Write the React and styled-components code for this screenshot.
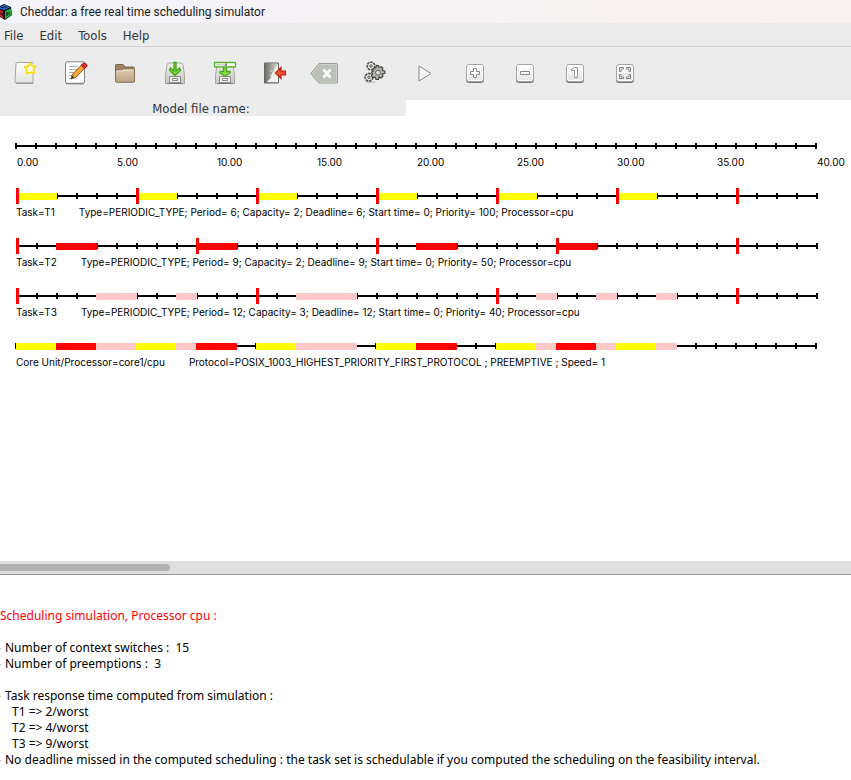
import React from "react";
import styled, { createGlobalStyle } from "styled-components";

const GlobalStyle = createGlobalStyle`
  *, *::before, *::after { box-sizing: border-box; }
  body { margin: 0; background: #fff; overflow: hidden; }
`;

const uiFont = `"DejaVu Sans Condensed", "DejaVu Sans", sans-serif`;

const Window = styled.div`
  display: flex;
  flex-direction: column;
  min-height: 100vh;
  font-family: ${uiFont};
  font-stretch: condensed;
  font-size: 12px;
  line-height: 16px;
  color: #000;
`;

const TitleBar = styled.header`
  display: flex;
  align-items: center;
  gap: 7px;
  height: 23px;
  background: linear-gradient(90deg, #f3f3f9, #f9f1ee);
  svg { flex: none; }
`;

const Title = styled.h1`
  margin: 0;
  font: 400 12px/16px Roboto, sans-serif;
  color: #1a1a1a;
`;

const MenuBar = styled.nav`
  display: flex;
  gap: 16px;
  height: 24px;
  padding: 2px 4px 0;
  background: #ececec;
  border-bottom: 1px solid #d2d2d2;
`;

const MenuButton = styled.button`
  padding: 0;
  border: 0;
  background: none;
  font: inherit;
  font-size: 13px;
  color: #303542;
`;

const Toolbar = styled.div`
  display: flex;
  height: 53px;
  background: #ececec;
`;

const ToolButton = styled.button`
  display: grid;
  place-items: center;
  flex: none;
  width: 50px;
  padding: 0 0 1px;
  border: 0;
  background: none;
`;

const FileRow = styled.div`
  width: 406px;
  max-width: 100%;
  height: 16px;
  background: #ececec;
  text-align: center;
  font-size: 13px;
  line-height: 18px;
  color: #303542;
  padding-right: 4px;
`;

const ChartPane = styled.main`
  height: 445px;
  padding-top: 22px;
  overflow: hidden;
  font-family: Inter, Arial, sans-serif;
  font-size: 10px;
  line-height: 12px;
`;

const TrackRow = styled.section`
  display: flex;
  flex-direction: column;
  gap: 2px;
  height: 50px;
`;

const TrackSvg = styled.svg`
  display: block;
  flex: none;
`;

const AxisLabels = styled.div`
  display: grid;
  grid-template-columns: repeat(9, 100px);
  padding-left: 17px;
`;

const TrackText = styled.div`
  display: flex;
  gap: 24px;
  padding-left: 16px;
  white-space: nowrap;
`;

const ScrollTrack = styled.div`
  height: 14px;
  padding-top: 3px;
  background: #dfdfdf;
  border-bottom: 1px solid #979797;
`;

const ScrollThumb = styled.div`
  width: 20%;
  height: 7px;
  border-radius: 0 4px 4px 0;
  background: #b1b3b5;
`;

const Log = styled.section`
  flex: 1;
  padding-top: 33px;
  font-family: "Noto Sans", "Open Sans", sans-serif;
  font-stretch: normal;
  font-size: 12px;
  white-space: pre;
`;

const LogHeading = styled.h2`
  margin: 0 0 16px;
  font: inherit;
  color: #f00;
`;

const LogGroup = styled.div`
  margin-bottom: ${(p) => (p.$last ? "0" : "16px")};
`;

const LogLine = styled.div`
  display: flex;
  align-items: center;
  padding-left: ${(p) => (p.$nested ? "7px" : "0")};

  &::before {
    content: "";
    width: 1px;
    height: 1px;
    margin-right: 4px;
    background: ${(p) => (p.$nested ? "transparent" : "#a9bfd0")};
  }
`;

function Cube() {
  return (
    <svg width="13" height="18" viewBox="0 0 13 18" aria-hidden="true">
      <path d="M0 3 4 1 11 4 12 12 5 17 0 14Z" fill="#111" />
      <path d="M0 4 5 1.500 10 4.500 4 7 0 6Z" fill="#2761c8" />
      <path d="M0 7 3 8.500 3.500 15.500 0 13Z" fill="#df282b" />
      <path d="M5 8 11 5.500 11.500 12 5 16Z" fill="#26a742" />
      <path d="M1 4.500h3M4 3.500l3 1M1 9v3M2 10l1 3M7 9v4M7 11l3-2M9 11l1 1" stroke="#14172b" fill="none" />
    </svg>
  );
}

const drive = (
  <>
    <path d="M2.500 22.500v-8L4 4q.3-2 2-2h12q1.700 0 2 2l1.500 10.500v8Z" fill="url(#metal)" stroke="#a5a6a1" />
    <path d="M4 22.500h16" stroke="#777873" />
    <path d="M6.500 21.500v-6h11v6Z" fill="#e8e8e5" stroke="#8e8f8a" />
    <path d="M9.500 17.500h5v2h-5Z" fill="#fff" stroke="#888984" />
  </>
);

const page = "M3 2.500q0-1 1-1h15q1 0 1 1v19q0 .5-1 .5H3q-1 0-1-1Z";
const pad = (
  <>
    <rect x="3" y="4" width="18" height="18" rx="3" fill="#777975" />
    <rect x="3.500" y="3.500" width="17" height="17" rx="2.500" fill="url(#paper)" stroke="#a3a4a0" />
    <rect x="4.500" y="4.500" width="15" height="15" rx="1.500" fill="none" stroke="#fff" />
  </>
);

const icons = {
  New: (
    <>
      <path d={page} fill="url(#paper)" stroke="#a6a6a6" />
      <path d="M3 22.300h17" stroke="#868686" />
      <circle cx="17.300" cy="7.500" r="5.500" fill="#fff28a" opacity=".8" />
      <path d="m17.300 2.300 1.700 2.700 3.600.5-2.200 2.900.9 3.500-4-.6-3.600 1.400-.1-3.900-1.900-2.900 3.600-.5Z" fill="#fffde6" stroke="#f2dc16" strokeWidth="1.700" strokeLinejoin="round" />
    </>
  ),
  Edit: (
    <>
      <rect x="2.500" y=".8" width="19" height="21.500" rx="1.500" fill="#fff" stroke="#858585" />
      <path d="M3 22.800h18" stroke="#777" />
      <path d="M6 5.500h9M6 8.500h10M6 11.500h6M6 14.500h4M6 17.500h3" stroke="#b1b1b1" />
      <path d="m8 18 1.500-4.800L18.500 4l3.500 3-9.200 9.300Z" fill="#f5a638" stroke="#9b5718" />
      <path d="m8 18 1-3.500 2.500 2Z" fill="#403527" />
      <path d="m18 4.300 2-2q2-1 3.500 1t-.5 3l-1.500 1.500Z" fill="#d92930" stroke="#a51d26" />
    </>
  ),
  Open: (
    <>
      <path d="M2.500 20V4.500q0-1 1-1h6q1 0 1.500 1l.7 1.500H20q1.500 0 1.500 1.500V20Z" fill="#9d8464" stroke="#79634a" />
      <path d="M2.500 20V10q0-1 1-1h5q1 0 2-1h10q1 0 1 1v11q0 1.300-1 1.300h-17q-1 0-1-1.300Z" fill="url(#folder)" stroke="#84705a" />
      <path d="M4 10h5q1 0 2-1h9.500" stroke="#eee1ce" fill="none" />
    </>
  ),
  Save: (
    <>
      {drive}
      <path d="M11 1.500h2V10l3.500-3 1 2L12 14.500 6.500 9l1-2L11 10Z" fill="#8bdd4b" stroke="#48a61c" strokeWidth="1.400" />
    </>
  ),
  "Save as": (
    <>
      {drive}
      <path d="M10.500 6h3v4.500h3.500v1.500l-5 3-5-3v-1.500h3.500Z" fill="#8bdd4b" stroke="#48a61c" strokeWidth="1.300" />
      <rect x="1.500" y="1.500" width="21" height="4.500" rx=".5" fill="#fff" stroke="#55b526" strokeWidth="1.300" />
      <path d="M3.500 3.800h9" stroke="#ccc" strokeWidth="1.500" />
      <path d="M13 2.500v2.500" stroke="#111" />
    </>
  ),
  Quit: (
    <>
      <path d="M1.500 2h14v20h-14Z" fill="url(#door)" stroke="#656763" />
      <path d="M15 3v18H3l4-3 4-10Z" fill="#f1f1ee" />
      <path d="M2 2.500h12L4.500 20.500 2 21.500Z" fill="url(#door)" />
      <path d="m7 9 3 3-3 3M10 9l2 3-2 3" stroke="#d7d7d2" fill="none" />
      <path d="m12.500 12 5.500-5.500v3.700h4.500v3.600H18v3.700Z" fill="#ee5335" stroke="#c51f0c" strokeWidth="1.200" />
    </>
  ),
  Clear: (
    <>
      <path d="M-2.300 12.500 6 2.500h17.500q1 0 1 1v17.500q0 1-1 1H6Z" fill="#bbc0b8" stroke="#979e95" />
      <path d="M-.8 12.500 6.500 3.500H23.500v17.500h-17Z" fill="none" stroke="#cbd0c8" />
      <path d="m10.500 8.500 7 8M17.500 8.500l-7 8" stroke="#f7f7f5" strokeWidth="3" />
    </>
  ),
  Analyse: (
    <>
      <ellipse cx="8" cy="21.300" rx="5" ry="1" fill="#ccc" />
      <circle cx="8" cy="5" r="3.800" fill="#f4f4f2" stroke="#555753" strokeWidth="1.800" strokeDasharray="2.600 .7" />
      <circle cx="6" cy="16.300" r="3.800" fill="#f4f4f2" stroke="#555753" strokeWidth="1.800" strokeDasharray="2.600 .7" />
      <circle cx="8" cy="5" r="1.200" fill="#fff" stroke="#444" />
      <circle cx="6" cy="16.300" r="1.200" fill="#fff" stroke="#444" />
      <path d="m13 6.500.4-2 2.200.2.600 2 2-1 1.700 1.500-.7 2 2.700 1v2.200l-2.700.8.700 2.400-2 1.400-1.800-1-.7 2.400h-2.400l-.8-2.400-2.500.7-1.200-1.900 1-1.800-1-1.800 1.700-1-.5-2Z" fill="#b7b8b4" stroke="#454743" strokeWidth="1.200" />
      <circle cx="15" cy="11.700" r="2.500" fill="#deded9" stroke="#5c5e59" />
    </>
  ),
  Run: <path d="M6 5 18 12.500 6 20Z" fill="#f7f7f6" stroke="#888a85" />,
  "Zoom in": (
    <>{pad}<path d="M10.500 7.500h3v3h3v3h-3v3h-3v-3h-3v-3h3Z" fill="#fff" stroke="#858585" /></>
  ),
  "Zoom out": <>{pad}<path d="M7.500 10.500h9v3h-9Z" fill="#fff" stroke="#858585" /></>,
  "Zoom 1": (
    <>{pad}<path d="M8.500 9.500v-1l3-2h3v10h-3v-7Z" fill="#fff" stroke="#989898" /></>
  ),
  "Zoom to fit": (
    <>
      {pad}
      <path d="M6.500 10.500v-4h4v1.500l-2.500.2V10.500ZM13.500 6.500h4v4H16V8h-2.500ZM6.500 13.500v4h4V16H8v-2.500ZM17.500 13.500v4h-4V16H16v-2.500Z" fill="#fff" stroke="#858585" />
    </>
  ),
};

function IconDefs() {
  return (
    <defs>
      <linearGradient id="paper" x2="0" y2="1"><stop stopColor="#fff" /><stop offset="1" stopColor="#e4e5e3" /></linearGradient>
      <linearGradient id="metal" x2="0" y2="1"><stop stopColor="#f3f3f1" /><stop offset="1" stopColor="#c5c6c1" /></linearGradient>
      <linearGradient id="folder" x2="0" y2="1"><stop stopColor="#dccab1" /><stop offset="1" stopColor="#bda382" /></linearGradient>
      <linearGradient id="door"><stop stopColor="#6d6f6b" /><stop offset="1" stopColor="#d1d1cd" /></linearGradient>
    </defs>
  );
}

const UNIT = 20;
const ticks = Array.from({ length: 41 }, (_, i) => i);
const Y = "#ffff00";
const R = "#ff0000";
const P = "#ffc8c8";

function Track({ origin = 16, bars = [], period }) {
  return (
    <TrackSvg width="851" height="16" shapeRendering="crispEdges" aria-hidden="true">
      <rect x={origin} y="7" width={40 * UNIT} height="2" />
      {ticks.map((t) => <rect key={t} x={origin + t * UNIT} y="5" width="2" height="6" />)}
      {bars.map(([start, end, color]) => (
        <rect key={start} x={16 + start * UNIT} y="5" width={(end - start) * UNIT + 1} height="7" fill={color} />
      ))}
      {period && ticks.filter((t) => t % period === 0).map((t) => (
        <rect key={t} x={16 + t * UNIT} y="0" width="3" height="16" fill={R} />
      ))}
    </TrackSvg>
  );
}

const paint = (spans, color) => spans.map(([a, b]) => [a, b, color]);

const tracks = [
  {
    name: "Task=T1", period: 6,
    info: "Type=PERIODIC_TYPE; Period= 6; Capacity= 2; Deadline= 6; Start time= 0; Priority= 100; Processor=cpu",
    bars: paint([[0, 2], [6, 8], [12, 14], [18, 20], [24, 26], [30, 32]], Y),
  },
  {
    name: "Task=T2", period: 9,
    info: "Type=PERIODIC_TYPE; Period= 9; Capacity= 2; Deadline= 9; Start time= 0; Priority= 50; Processor=cpu",
    bars: paint([[2, 4], [9, 11], [20, 22], [27, 29]], R),
  },
  {
    name: "Task=T3", period: 12,
    info: "Type=PERIODIC_TYPE; Period= 12; Capacity= 3; Deadline= 12; Start time= 0; Priority= 40; Processor=cpu",
    bars: paint([[4, 6], [8, 9], [14, 17], [26, 27], [29, 30], [32, 33]], P),
  },
  {
    name: "Core Unit/Processor=core1/cpu", origin: 15,
    info: "Protocol=POSIX_1003_HIGHEST_PRIORITY_FIRST_PROTOCOL ; PREEMPTIVE ; Speed= 1",
    bars: [
      [0, 2, Y], [2, 4, R], [4, 6, P], [6, 8, Y], [8, 9, P], [9, 11, R],
      [12, 14, Y], [14, 17, P], [18, 20, Y], [20, 22, R], [24, 26, Y],
      [26, 27, P], [27, 29, R], [29, 30, P], [30, 32, Y], [32, 33, P],
    ],
  },
];

export default function App() {
  return (
    <Window>
      <GlobalStyle />
      <TitleBar>
        <Cube />
        <Title>Cheddar: a free real time scheduling simulator</Title>
      </TitleBar>
      <MenuBar>
        {["File", "Edit", "Tools", "Help"].map((m) => <MenuButton key={m}>{m}</MenuButton>)}
      </MenuBar>
      <Toolbar role="toolbar" aria-label="Main toolbar">
        {Object.entries(icons).map(([name, art]) => (
          <ToolButton key={name} aria-label={name}>
            <svg width="32" height="24" viewBox="-4 0 32 24" aria-hidden="true">
              {name === "New" && <IconDefs />}
              {art}
            </svg>
          </ToolButton>
        ))}
      </Toolbar>
      <FileRow>Model file name:</FileRow>
      <ChartPane>
        <TrackRow>
          <Track origin={15} />
          <AxisLabels>
            {[0, 5, 10, 15, 20, 25, 30, 35, 40].map((n) => <span key={n}>{n.toFixed(2)}</span>)}
          </AxisLabels>
        </TrackRow>
        {tracks.map((t) => (
          <TrackRow key={t.name}>
            <Track origin={t.origin} bars={t.bars} period={t.period} />
            <TrackText><span>{t.name}</span><span>{t.info}</span></TrackText>
          </TrackRow>
        ))}
      </ChartPane>
      <ScrollTrack><ScrollThumb /></ScrollTrack>
      <Log>
        <LogHeading>Scheduling simulation, Processor cpu :</LogHeading>
        <LogGroup>
          <LogLine>{"Number of context switches :  15"}</LogLine>
          <LogLine>{"Number of preemptions :  3"}</LogLine>
        </LogGroup>
        <LogGroup $last>
          <LogLine>Task response time computed from simulation :</LogLine>
          <LogLine $nested>{"T1 => 2/worst"}</LogLine>
          <LogLine $nested>{"T2 => 4/worst"}</LogLine>
          <LogLine $nested>{"T3 => 9/worst"}</LogLine>
          <LogLine>No deadline missed in the computed scheduling : the task set is schedulable if you computed the scheduling on the feasibility interval.</LogLine>
        </LogGroup>
      </Log>
    </Window>
  );
}
